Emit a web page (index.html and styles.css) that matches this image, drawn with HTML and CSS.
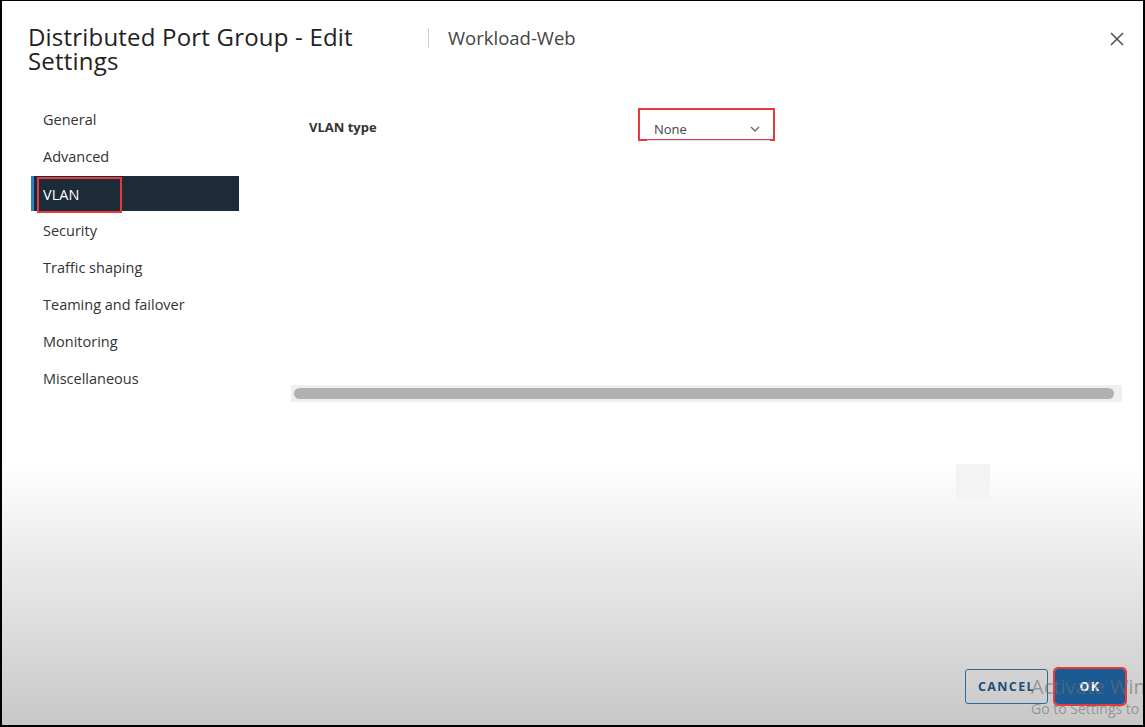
FILE: index.html
```html
<!DOCTYPE html>
<html>
<head>
<meta charset="utf-8">
<link rel="stylesheet" href="styles.css">
</head>
<body>
<div class="screen">
  <div class="header">
    <div class="title">Distributed Port Group - Edit Settings</div>
    <div class="divider"></div>
    <div class="subtitle">Workload-Web</div>
    <svg class="close" width="14" height="14" viewBox="0 0 14 14"><path d="M1 1 L13 13 M13 1 L1 13" stroke="#555" stroke-width="1.6" fill="none"/></svg>
  </div>
  <div class="body">
    <ul class="nav">
      <li class="nav-item">General</li>
      <li class="nav-item">Advanced</li>
      <li class="nav-item active"><span class="mark">VLAN</span></li>
      <li class="nav-item">Security</li>
      <li class="nav-item">Traffic shaping</li>
      <li class="nav-item">Teaming and failover</li>
      <li class="nav-item">Monitoring</li>
      <li class="nav-item">Miscellaneous</li>
    </ul>
    <div class="content">
      <div class="panel">
        <div class="form-row">
          <div class="label">VLAN type</div>
          <div class="select-mark">
            <div class="select">
              <span>None</span>
              <svg width="10" height="6" viewBox="0 0 10 6"><path d="M1 1 L5 5 L9 1" stroke="#666" stroke-width="1.3" fill="none"/></svg>
            </div>
          </div>
        </div>
      </div>
      <div class="hscroll"><div class="thumb"></div></div>
    </div>
  </div>
  <div class="footer">
    <button class="btn btn-outline">CANCEL</button>
    <button class="btn btn-primary">OK</button>
  </div>
  <div class="artifact"></div>
  <div class="watermark">
    <div class="wm1">Activate Windows</div>
    <div class="wm2">Go to Settings to activate Windows.</div>
  </div>
</div>
</body>
</html>
```

FILE: styles.css
```css
* { box-sizing: border-box; }
html, body { margin: 0; padding: 0; }
body { width: 1145px; height: 727px; background: #000; font-family: "Open Sans", "Noto Sans", sans-serif; color: #333; }

.screen {
  position: relative;
  width: 1145px;
  height: 727px;
  overflow: hidden;
  border-top: 1px solid #000;
  border-left: 2px solid #000;
  border-right: 2px solid #000;
  border-bottom: 2px solid #000;
  background: linear-gradient(to bottom, #fff 0, #fff 460px, #c8c8c8 724px);
  display: flex;
  flex-direction: column;
}

.header {
  display: flex;
  align-items: flex-start;
  padding: 24px 18px 0 26px;
  height: 101px;
}
.title {
  width: 400px;
  padding-right: 40px;
  font-size: 24px;
  letter-spacing: 0.2px;
  line-height: 24px;
  color: #222;
  font-weight: 400;
}
.divider {
  width: 1px;
  height: 20px;
  background: #cfcfcf;
  margin-top: 3px;
}
.subtitle {
  margin-left: 19px;
  font-size: 18.5px;
  line-height: 26px;
  color: #444;
}
.close { margin-left: auto; margin-top: 7px; margin-right: 1px; }

.body { display: flex; }

.nav {
  list-style: none;
  margin: 0;
  padding: 0 0 0 29px;
  width: 289px;
  display: flex;
  flex-direction: column;
  gap: 2px;
}
.nav-item {
  width: 208px;
  height: 35px;
  line-height: 35px;
  font-size: 14.5px;
  color: #333;
  border-left: 3px solid transparent;
  padding-left: 9px;
}
.nav-item.active {
  background: #1d2b39;
  border-left-color: #2f7fc4;
  padding-left: 3px;
  color: #fff;
}
.mark {
  display: block;
  width: 85px;
  height: 36px;
  line-height: 32px;
  border: 2px solid #e8383d;
  padding-left: 4px;
  margin-top: 1px;
}

.content { width: 831px; }
.panel { height: 283px; padding-top: 6px; }
.form-row { display: flex; align-items: center; }
.label {
  width: 347px;
  padding-left: 18px;
  padding-top: 4px;
  font-size: 13px;
  font-weight: 700;
  color: #333;
}
.select-mark {
  width: 137px;
  height: 33px;
  border: 2px solid #e8383d;
  padding: 0 3px 0 7px;
}
.select {
  height: 31px;
  display: flex;
  align-items: center;
  justify-content: space-between;
  padding: 7px 10px 0 7px;
  font-size: 13px;
  color: #444;
  border-bottom: 1px solid #cfe3f2;
}

.hscroll {
  height: 17px;
  background: #efefef;
  padding: 3px 8px 3px 3px;
}
.thumb {
  height: 11px;
  background: #b1b1b1;
  border-radius: 6px;
}

.footer {
  margin-top: auto;
  display: flex;
  justify-content: flex-end;
  gap: 7px;
  padding: 0 18px 21px 0;
}
.btn {
  height: 35px;
  font-family: "Open Sans", "Noto Sans", sans-serif;
  font-size: 12.5px;
  font-weight: 700;
  letter-spacing: 1.4px;
  border-radius: 3px;
  padding: 0;
}
.btn-outline {
  width: 83px;
  background: transparent;
  border: 1.5px solid #2a6a9c;
  color: #1e4e79;
}
.btn-primary {
  width: 70px;
  background: #1b5a93;
  border: none;
  color: #fff;
  outline: 2px solid #e8383d;
  outline-offset: 0;
}

.artifact {
  position: absolute;
  left: 954px;
  top: 463px;
  width: 34px;
  height: 35px;
  background: #f3f3f3;
}
.watermark {
  position: absolute;
  left: 1029px;
  top: 673px;
  color: rgba(110,110,110,0.6);
  font-family: "Open Sans", sans-serif;
  white-space: nowrap;
  pointer-events: none;
}
.wm1 { font-size: 20px; line-height: 26px; }
.wm2 { font-size: 14px; line-height: 20px; margin-top: -1px; }
```
